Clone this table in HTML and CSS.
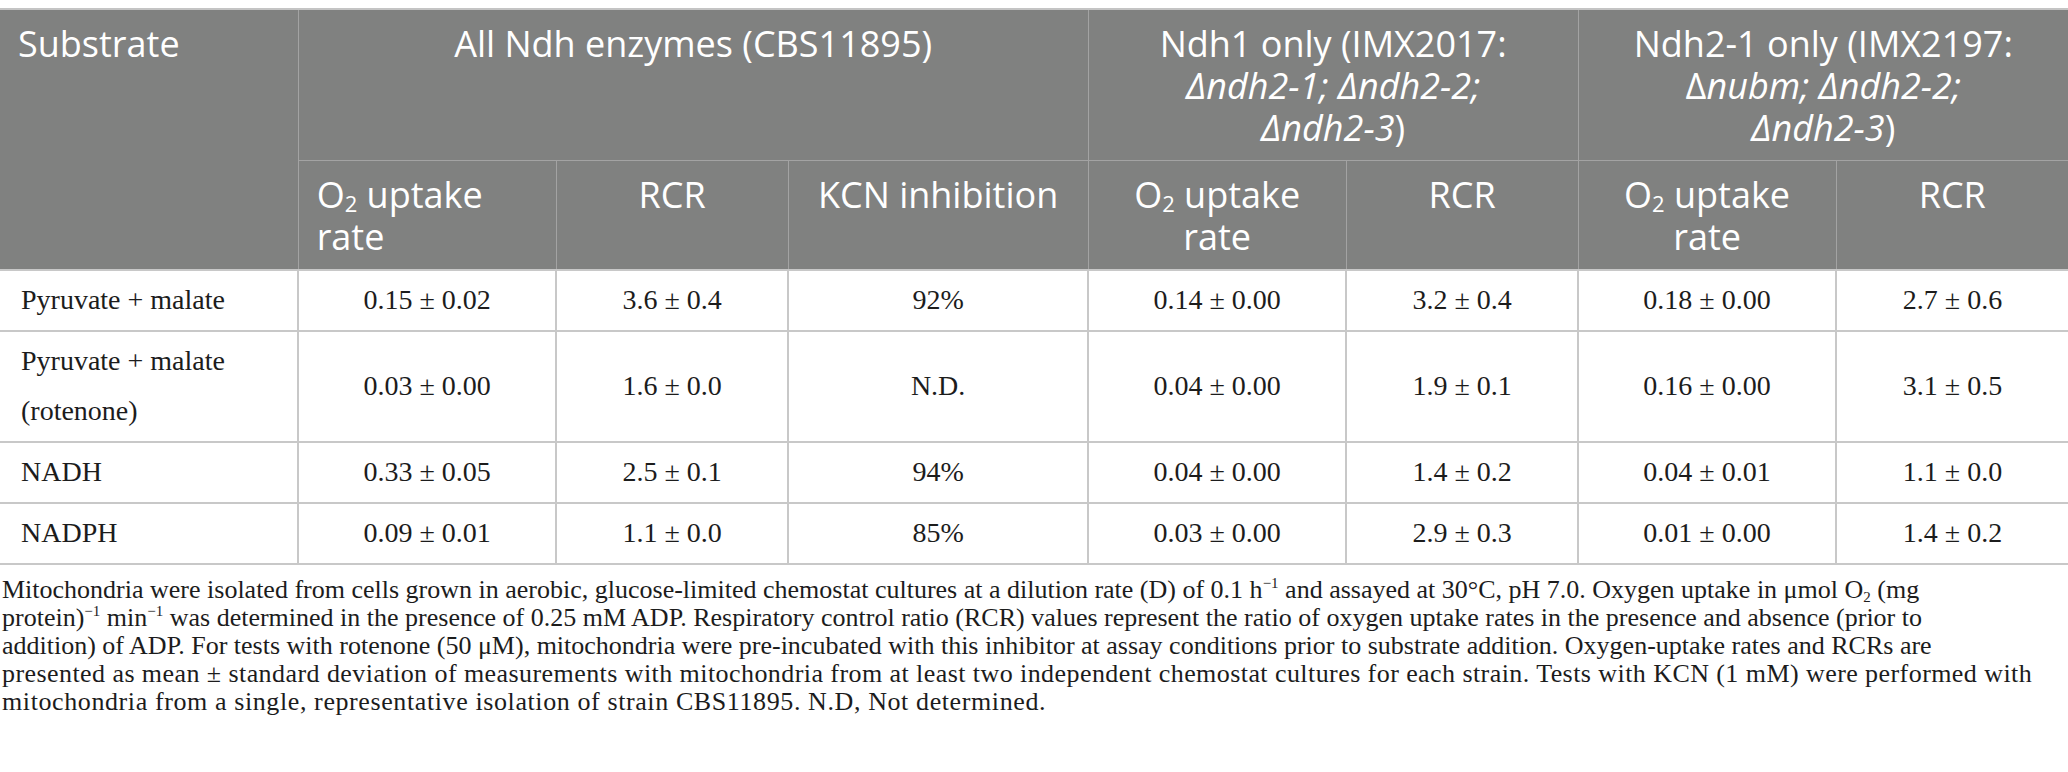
FILE: index.html
```html
<!DOCTYPE html>
<html lang="en">
<head>
    <meta charset="UTF-8">
    <title>Mitochondrial respiration</title>
    <link rel="stylesheet" href="styles.css">
</head>
<body>

    <table class="resp">
        <colgroup>
            <col class="c-sub">
            <col class="c-o2">
            <col class="c-rcr">
            <col class="c-kcn">
            <col class="c-o2">
            <col class="c-rcr">
            <col class="c-o2">
            <col class="c-rcr">
        </colgroup>
        <thead>
            <tr class="top">
                <th rowspan="2" class="left">Substrate</th>
                <th colspan="3">All Ndh enzymes (CBS11895)</th>
                <th colspan="2">Ndh1 only (IMX2017:<br><i>Δndh2-1; Δndh2-2;</i><br><i>Δndh2-3</i>)</th>
                <th colspan="2">Ndh2-1 only (IMX2197:<br>Δ<i>nubm; Δndh2-2;</i><br><i>Δndh2-3</i>)</th>
            </tr>
            <tr class="sub">
                <th class="left">O<sub>2</sub> uptake<br>rate</th>
                <th>RCR</th>
                <th>KCN inhibition</th>
                <th>O<sub>2</sub> uptake<br>rate</th>
                <th>RCR</th>
                <th>O<sub>2</sub> uptake<br>rate</th>
                <th>RCR</th>
            </tr>
        </thead>
        <tbody>
            <tr>
                <td class="left">Pyruvate + malate</td>
                <td>0.15 ± 0.02</td>
                <td>3.6 ± 0.4</td>
                <td>92%</td>
                <td>0.14 ± 0.00</td>
                <td>3.2 ± 0.4</td>
                <td>0.18 ± 0.00</td>
                <td>2.7 ± 0.6</td>
            </tr>
            <tr>
                <td class="left">Pyruvate + malate<br>(rotenone)</td>
                <td>0.03 ± 0.00</td>
                <td>1.6 ± 0.0</td>
                <td>N.D.</td>
                <td>0.04 ± 0.00</td>
                <td>1.9 ± 0.1</td>
                <td>0.16 ± 0.00</td>
                <td>3.1 ± 0.5</td>
            </tr>
            <tr>
                <td class="left">NADH</td>
                <td>0.33 ± 0.05</td>
                <td>2.5 ± 0.1</td>
                <td>94%</td>
                <td>0.04 ± 0.00</td>
                <td>1.4 ± 0.2</td>
                <td>0.04 ± 0.01</td>
                <td>1.1 ± 0.0</td>
            </tr>
            <tr>
                <td class="left">NADPH</td>
                <td>0.09 ± 0.01</td>
                <td>1.1 ± 0.0</td>
                <td>85%</td>
                <td>0.03 ± 0.00</td>
                <td>2.9 ± 0.3</td>
                <td>0.01 ± 0.00</td>
                <td>1.4 ± 0.2</td>
            </tr>
        </tbody>
    </table>

    <div class="note">
        <span class="ln">Mitochondria were isolated from cells grown in aerobic, glucose-limited chemostat cultures at a dilution rate (D) of 0.1 h<sup>−1</sup> and assayed at 30°C, pH 7.0. Oxygen uptake in μmol O<sub>2</sub> (mg</span>
        <span class="ln">protein)<sup>−1</sup> min<sup>−1</sup> was determined in the presence of 0.25 mM ADP. Respiratory control ratio (RCR) values represent the ratio of oxygen uptake rates in the presence and absence (prior to</span>
        <span class="ln">addition) of ADP. For tests with rotenone (50 μM), mitochondria were pre-incubated with this inhibitor at assay conditions prior to substrate addition. Oxygen-uptake rates and RCRs are</span>
        <span class="ln wide">presented as mean ± standard deviation of measurements with mitochondria from at least two independent chemostat cultures for each strain. Tests with KCN (1 mM) were performed with</span>
        <span class="ln wider">mitochondria from a single, representative isolation of strain CBS11895. N.D, Not determined.</span>
    </div>

</body>
</html>
```

FILE: styles.css
```css
body {
    margin: 0;
    padding-top: 8px;
    background: #fff;
    color: #1c1c1c;
    font-family: "Liberation Serif", "Times New Roman", serif;
}

.resp {
    width: 2068px;
    border-collapse: collapse;
    table-layout: fixed;
    border-top: 2px solid #c4c4c4;
    border-bottom: 2px solid #c4c4c4;
}

.c-sub { width: 297px; }
.c-o2 { width: 257px; }
.c-rcr { width: 231px; }
.c-kcn { width: 299px; }

/* header */
th {
    background: #808180;
    color: #fff;
    font-family: "Open Sans", Lato, sans-serif;
    font-weight: 400;
    font-size: 36px;
    line-height: 42px;
    text-align: center;
    vertical-align: top;
    padding: 13px 18px 11px;
    border: 1px solid #a3a3a3;
}
th:first-child { border-left: none; }
th:last-child { border-right: none; }
th i { font-style: italic; }
th sub {
    font-size: 22px;
    line-height: 0;
    vertical-align: -4px;
}
.left { text-align: left !important; }

/* body */
td {
    font-size: 28px;
    line-height: 50px;
    text-align: center;
    vertical-align: middle;
    padding: 4px 20px 5px;
    border: 2px solid #c8c8c8;
}
td:first-child { border-left: none; }
td:last-child { border-right: none; }
td.left { padding-left: 21px; }

/* footnote */
.note {
    margin: 11px 0 0 2px;
    font-size: 26px;
    line-height: 28px;
    white-space: nowrap;
}
.ln {
    display: block;
    height: 28px;
}
.wide { letter-spacing: 0.43px; }
.wider { letter-spacing: 0.6px; }
.note sup {
    font-size: 15px;
    line-height: 0;
    vertical-align: 10px;
}
.note sub {
    font-size: 15px;
    line-height: 0;
    vertical-align: -4px;
}
```
